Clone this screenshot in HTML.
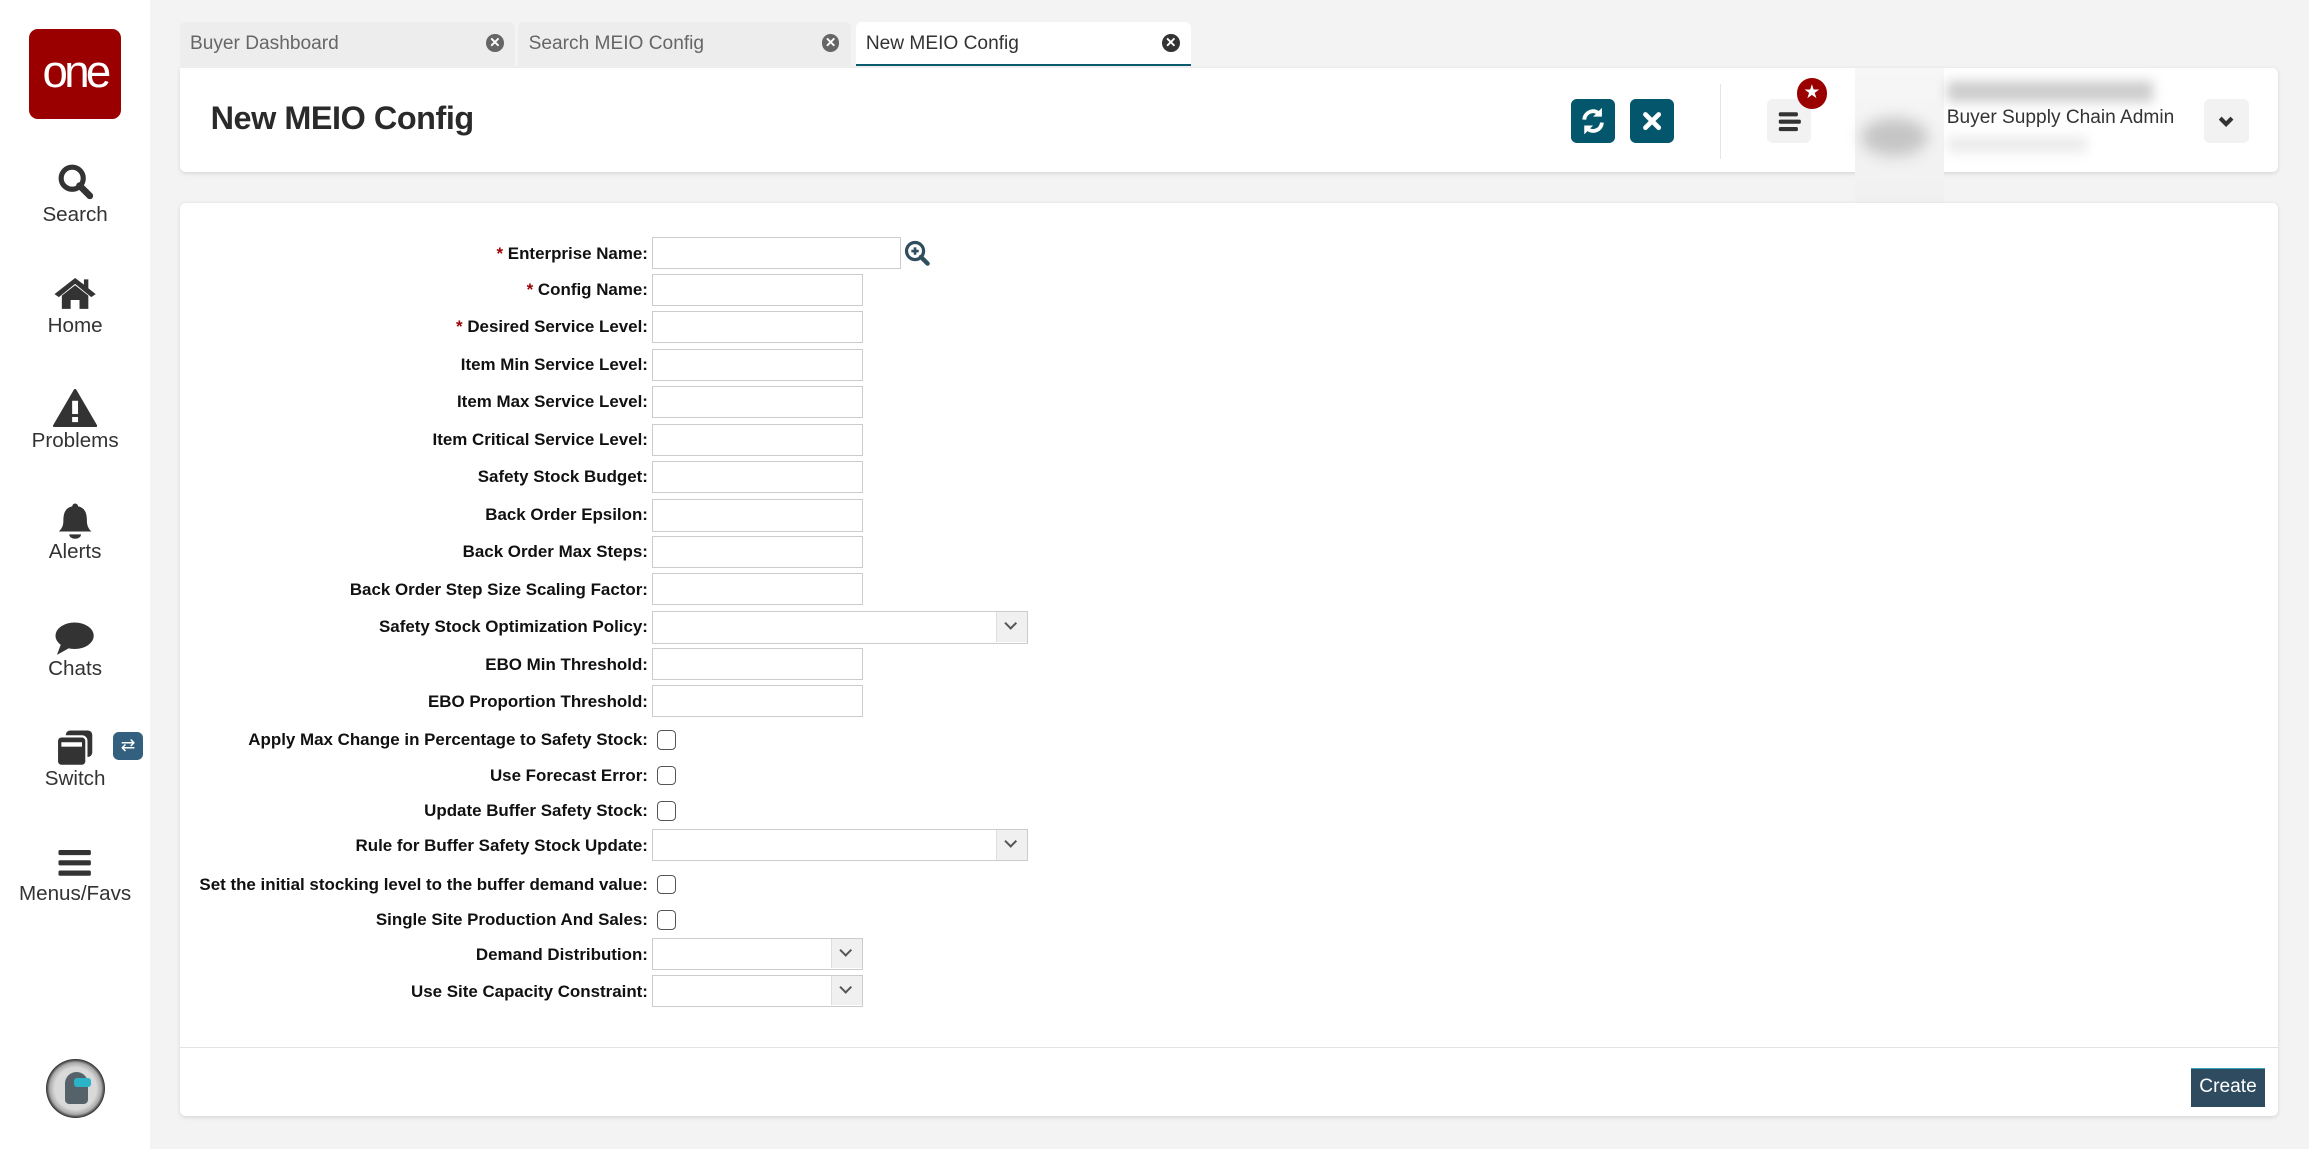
<!DOCTYPE html>
<html><head><meta charset="utf-8">
<style>
html,body{margin:0;padding:0;overflow:hidden;background:#f3f3f3;}
body{width:2309px;height:1149px;}
.page{position:relative;width:1568px;height:781px;zoom:1.47258;font-family:"Liberation Sans",Arial,sans-serif;color:#222;}
.abs{position:absolute;}
.side{left:0;top:0;width:102px;height:781px;background:#fff;}
.logo{left:20px;top:20px;width:62px;height:61px;background:#9a0000;border-radius:6px;color:#fff;font-size:31px;text-align:center;line-height:58px;letter-spacing:-2.5px;}
.nav{left:0;width:102px;text-align:center;font-size:14px;color:#333;}
.nav svg{display:block;margin:0 auto;}
.tab{top:15px;height:30px;background:#ededed;border-radius:4px 4px 0 0;font-size:13px;color:#666;line-height:30px;padding-left:7px;box-sizing:border-box;}
.tab .x{position:absolute;right:8px;top:8px;width:12px;height:12px;border-radius:50%;background:#666;color:#fff;font-size:9px;line-height:12px;text-align:center;font-weight:bold;}
.card{background:#fff;border-radius:4px;box-shadow:0 1px 3px rgba(0,0,0,.12);}
.lbl{right:1128px;font-size:11.5px;font-weight:bold;letter-spacing:0;white-space:nowrap;color:#111;margin-top:1px;}
.lbl b{color:#9a0000;}
.inp{left:443px;width:143px;height:22px;border:1px solid #ccc;box-sizing:border-box;background:#fff;}
.sel{left:443px;height:22px;border:1px solid #ccc;box-sizing:border-box;background:#fff;}
.sel i{position:absolute;right:0;top:0;width:20px;height:20px;background:#f0f0f0;border-left:1px solid #ddd;}
.sel i:after{content:"";position:absolute;left:6px;top:5px;width:5px;height:5px;border-right:2px solid #555;border-bottom:2px solid #555;transform:rotate(45deg);}
.cb{left:446px;width:12px;height:12px;border:1px solid #555;border-radius:3px;background:#fff;}
.btn{width:30px;height:30px;border-radius:4px;}
</style></head><body><div class="page">

<div class="abs side"></div>
<div class="abs logo">one</div>

<div class="abs nav" style="top:110px">
<svg width="26" height="26" viewBox="0 0 26 26"><circle cx="11" cy="11" r="7.5" fill="none" stroke="#333" stroke-width="3.5"/><path d="M16 16 L23 23" stroke="#333" stroke-width="4.5" stroke-linecap="round"/></svg>
<div style="margin-top:2px">Search</div></div>

<div class="abs nav" style="top:187px">
<svg width="30" height="24" viewBox="0 0 30 24"><path d="M15 2 L1 13 L4 15 L15 6 L26 15 L29 13 L24 9 V3 H21 V6.5 Z" fill="#333"/><path d="M6 14 L15 7 L24 14 V23 H18 V17 H12 V23 H6 Z" fill="#333"/></svg>
<div style="margin-top:2px">Home</div></div>

<div class="abs nav" style="top:264px">
<svg width="30" height="26" viewBox="0 0 30 26"><path d="M15 1 L29 25 H1 Z" fill="#333" stroke="#333" stroke-width="2" stroke-linejoin="round"/><rect x="13" y="8" width="4" height="9" fill="#fff"/><rect x="13" y="19" width="4" height="3.5" fill="#fff"/></svg>
<div style="margin-top:1px">Problems</div></div>

<div class="abs nav" style="top:341px">
<svg width="26" height="26" viewBox="0 0 26 26"><path d="M13 1 a2 2 0 0 1 2 2 c5 1 6 5 6 10 c0 4 2 6 3 7 H2 c1-1 3-3 3-7 c0-5 1-9 6-10 a2 2 0 0 1 2-2z" fill="#333"/><path d="M9 22 h8 a4 3 0 0 1 -8 0z" fill="#333"/></svg>
<div style="margin-top:0px">Alerts</div></div>

<div class="abs nav" style="top:422px">
<svg width="28" height="24" viewBox="0 0 28 24"><ellipse cx="14" cy="10" rx="13" ry="9" fill="#333"/><path d="M5 15 L2 23 L11 18 Z" fill="#333"/></svg>
<div style="margin-top:0px">Chats</div></div>

<div class="abs nav" style="top:495px">
<svg width="28" height="26" viewBox="0 0 28 26"><rect x="8" y="1" width="18" height="18" rx="3" fill="#333"/><rect x="2" y="5" width="20" height="20" rx="3" fill="#333" stroke="#fff" stroke-width="1.5"/><rect x="5" y="9" width="14" height="3" fill="#fff"/></svg>
<div style="margin-top:0px">Switch</div></div>
<div class="abs" style="left:77px;top:497px;width:20px;height:19px;background:#34607f;border-radius:4px;color:#fff;font-size:12px;text-align:center;line-height:18px;">⇄</div>

<div class="abs nav" style="top:575px">
<svg width="24" height="22" viewBox="0 0 24 22"><rect x="1" y="2" width="22" height="3.5" rx="1" fill="#333"/><rect x="1" y="9" width="22" height="3.5" rx="1" fill="#333"/><rect x="1" y="16" width="22" height="3.5" rx="1" fill="#333"/></svg>
<div style="margin-top:2px">Menus/Favs</div></div>

<div class="abs" style="left:31px;top:719px;width:40px;height:40px;border-radius:50%;background:radial-gradient(circle at 50% 50%,#d9d9d9 0 50%,#aaa 62%,#333 70%,#222 100%);">
<div style="position:absolute;left:13px;top:9px;width:16px;height:22px;border-radius:8px 8px 3px 3px;background:#55626a;"></div>
<div style="position:absolute;left:19px;top:13px;width:12px;height:6px;background:#2bb3c8;border-radius:2px;"></div>
</div>

<div class="abs tab" style="left:122px;width:228px;">Buyer Dashboard<span class="x">✕</span></div>
<div class="abs tab" style="left:352px;width:226px;">Search MEIO Config<span class="x">✕</span></div>
<div class="abs tab" style="left:581px;width:228px;background:#fff;color:#333;border-bottom:2px solid #0b5a6e;">New MEIO Config<span class="x" style="background:#333">✕</span></div>

<div class="abs card" style="left:122px;top:46px;width:1425px;height:71px;border-radius:0 4px 4px 4px;"></div>
<div class="abs" style="left:143px;top:68px;font-size:22px;font-weight:bold;color:#2a2a2a;letter-spacing:-0.3px;">New MEIO Config</div>
<div class="abs btn" style="left:1067px;top:67px;background:#03566b;">
<svg width="30" height="30" viewBox="0 0 30 30"><path d="M9 14 a6 6 0 0 1 11-3" fill="none" stroke="#fff" stroke-width="2.6"/><path d="M21 6 v6 h-6z" fill="#fff"/><path d="M21 16 a6 6 0 0 1 -11 3" fill="none" stroke="#fff" stroke-width="2.6"/><path d="M9 24 v-6 h6z" fill="#fff"/></svg></div>
<div class="abs btn" style="left:1107px;top:67px;background:#03566b;">
<svg width="30" height="30" viewBox="0 0 30 30"><path d="M10.5 10.5 L19.5 19.5 M19.5 10.5 L10.5 19.5" stroke="#fff" stroke-width="3.2" stroke-linecap="round"/></svg></div>
<div class="abs" style="left:1168px;top:57px;width:1px;height:51px;background:#e5e5e5;"></div>
<div class="abs btn" style="left:1200px;top:67px;background:#f2f2f2;">
<svg width="30" height="30" viewBox="0 0 30 30"><rect x="8" y="9" width="13" height="2.8" rx="1" fill="#333"/><rect x="8" y="14" width="15" height="2.8" rx="1" fill="#333"/><rect x="8" y="19" width="13" height="2.8" rx="1" fill="#333"/></svg></div>
<div class="abs" style="left:1220px;top:53px;width:21px;height:21px;border-radius:50%;background:#9a0000;color:#fff;font-size:13px;text-align:center;line-height:21px;">★</div>
<div class="abs" style="left:1260px;top:46px;width:60px;height:95px;background:linear-gradient(#f7f7f7,#f0f0f0);"></div>
<div class="abs" style="left:1264px;top:80px;width:45px;height:26px;border-radius:50%;background:#c5c5c5;filter:blur(5px);"></div>
<div class="abs" style="left:1322px;top:55px;width:140px;height:14px;background:#ccc;filter:blur(4px);"></div>
<div class="abs" style="left:1322px;top:73px;font-size:13px;color:#333;">Buyer Supply Chain Admin</div>
<div class="abs" style="left:1322px;top:93px;width:95px;height:10px;background:#eaeaea;filter:blur(4px);"></div>
<div class="abs btn" style="left:1497px;top:67px;background:#f2f2f2;">
<svg width="30" height="30" viewBox="0 0 30 30"><path d="M11 13 L15 17 L19 13" fill="none" stroke="#333" stroke-width="2.8"/></svg></div>

<div class="abs card" style="left:122px;top:138px;width:1425px;height:620px;"></div>
<div class="abs" style="left:122px;top:711px;width:1425px;height:1px;background:#e3e3e3;"></div>
<div class="abs" style="left:1488px;top:725px;width:50px;height:27px;background:#2e4b60;border-top:1px solid #3aa0c0;box-sizing:border-box;color:#fff;font-size:13px;text-align:center;line-height:25px;">Create</div>

<div class="abs lbl" style="top:165px"><b>*</b> Enterprise Name:</div>
<div class="abs inp" style="top:161px;width:169px"></div>
<svg class="abs" style="left:614px;top:163px" width="18" height="18" viewBox="0 0 18 18"><circle cx="7.5" cy="7.5" r="5.8" fill="none" stroke="#2f4f5f" stroke-width="2.2"/><path d="M5 7.5h5M7.5 5v5" stroke="#2f4f5f" stroke-width="1.8"/><path d="M11.5 11.5 L16 16" stroke="#2f4f5f" stroke-width="3" stroke-linecap="round"/></svg>

<div class="abs lbl" style="top:189px"><b>*</b> Config Name:</div>
<div class="abs inp" style="top:186px"></div>
<div class="abs lbl" style="top:214px"><b>*</b> Desired Service Level:</div>
<div class="abs inp" style="top:211px"></div>
<div class="abs lbl" style="top:240px">Item Min Service Level:</div>
<div class="abs inp" style="top:237px"></div>
<div class="abs lbl" style="top:265px">Item Max Service Level:</div>
<div class="abs inp" style="top:262px"></div>
<div class="abs lbl" style="top:291px">Item Critical Service Level:</div>
<div class="abs inp" style="top:288px"></div>
<div class="abs lbl" style="top:316px">Safety Stock Budget:</div>
<div class="abs inp" style="top:313px"></div>
<div class="abs lbl" style="top:342px">Back Order Epsilon:</div>
<div class="abs inp" style="top:339px"></div>
<div class="abs lbl" style="top:367px">Back Order Max Steps:</div>
<div class="abs inp" style="top:364px"></div>
<div class="abs lbl" style="top:393px">Back Order Step Size Scaling Factor:</div>
<div class="abs inp" style="top:389px"></div>
<div class="abs lbl" style="top:418px">Safety Stock Optimization Policy:</div>
<div class="abs sel" style="top:415px;width:255px"><i></i></div>
<div class="abs lbl" style="top:444px">EBO Min Threshold:</div>
<div class="abs inp" style="top:440px"></div>
<div class="abs lbl" style="top:469px">EBO Proportion Threshold:</div>
<div class="abs inp" style="top:465px"></div>
<div class="abs lbl" style="top:495px">Apply Max Change in Percentage to Safety Stock:</div>
<div class="abs cb" style="top:496px"></div>
<div class="abs lbl" style="top:519px">Use Forecast Error:</div>
<div class="abs cb" style="top:520px"></div>
<div class="abs lbl" style="top:543px">Update Buffer Safety Stock:</div>
<div class="abs cb" style="top:544px"></div>
<div class="abs lbl" style="top:567px">Rule for Buffer Safety Stock Update:</div>
<div class="abs sel" style="top:563px;width:255px"><i></i></div>
<div class="abs lbl" style="top:593px">Set the initial stocking level to the buffer demand value:</div>
<div class="abs cb" style="top:594px"></div>
<div class="abs lbl" style="top:617px">Single Site Production And Sales:</div>
<div class="abs cb" style="top:618px"></div>
<div class="abs lbl" style="top:641px">Demand Distribution:</div>
<div class="abs sel" style="top:637px;width:143px"><i></i></div>
<div class="abs lbl" style="top:666px">Use Site Capacity Constraint:</div>
<div class="abs sel" style="top:662px;width:143px"><i></i></div>

</div></body></html>
